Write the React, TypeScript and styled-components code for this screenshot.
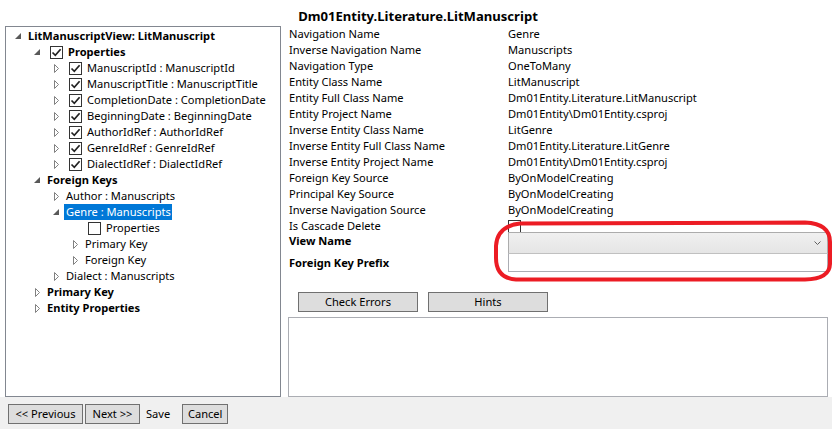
import React from 'react';
import styled, { createGlobalStyle } from 'styled-components';

const FONT = `'Segoe UI', 'Noto Sans', sans-serif`;

const GlobalStyle = createGlobalStyle`
  html, body { margin: 0; padding: 0; background: #f0f0f0; }
  body { font-family: ${FONT}; font-size: 11.1px; color: #000; }
  * { box-sizing: border-box; }
`;

const Window = styled.div`
  position: relative;
  width: 832px;
  height: 429px;
  display: flex;
  flex-direction: column;
  background: #f0f0f0;
  overflow: hidden;
`;

const Content = styled.div`
  height: 397px;
  background: #fff;
  display: flex;
  flex-direction: column;
`;

const Title = styled.div`
  height: 26px;
  padding-top: 6px;
  text-align: center;
  font-weight: bold;
  font-size: 13.1px;
  line-height: 20px;
  padding-left: 4px;
`;

const Main = styled.div`
  flex: 1;
  display: flex;
  gap: 7px;
  padding: 0 4px 0 5px;
  min-height: 0;
`;

const TreePanel = styled.div`
  width: 276px;
  border: 1px solid #828790;
  padding: 1px;
  display: flex;
  flex-direction: column;
`;

const TreeRow = styled.div<{ $level: number }>`
  display: flex;
  align-items: center;
  height: 16px;
  padding-left: ${p => p.$level * 19}px;
`;

const Expander = styled.div<{ $open: boolean }>`
  width: 19px;
  height: 16px;
  display: flex;
  align-items: center;
  padding-left: ${p => (p.$open ? 8 : 9)}px;
`;

const Header = styled.div<{ $selected?: boolean; $bold?: boolean }>`
  display: flex;
  align-items: center;
  height: 16px;
  padding: 0 1px;
  gap: 4px;
  background: ${p => (p.$selected ? '#0078d7' : 'transparent')};
  color: ${p => (p.$selected ? '#fff' : '#000')};
  font-weight: ${p => (p.$bold ? 'bold' : 'normal')};
  white-space: nowrap;
  line-height: 16px;
`;

const HeaderText = styled.span`
  padding-left: 1px;
`;

const CheckBoxBox = styled.span<{ $withLead?: boolean }>`
  width: 13px;
  height: 13px;
  border: 1px solid #333;
  background: #fff;
  display: inline-flex;
  align-items: center;
  justify-content: center;
  margin-left: ${p => (p.$withLead ? 4 : 0)}px;
  flex: none;
`;

const RightPanel = styled.div`
  width: 540px;
  display: flex;
  flex-direction: column;
`;

const PropsGrid = styled.div`
  display: grid;
  grid-template-columns: 220px 1fr;
  grid-auto-rows: 16px;
  line-height: 16px;
`;

const Label = styled.div<{ $bold?: boolean }>`
  padding-left: 1px;
  font-weight: ${p => (p.$bold ? 'bold' : 'normal')};
  white-space: nowrap;
`;

const Value = styled.div`
  white-space: nowrap;
  display: flex;
  align-items: center;
`;

const EditRow = styled.div<{ $h: number; $lift?: number }>`
  display: grid;
  grid-template-columns: 220px 1fr;
  height: ${p => p.$h}px;
  margin-top: ${p => -(p.$lift || 0)}px;
  align-items: start;
  line-height: 18px;
`;

const Combo = styled.div`
  height: 22px;
  border: 1px solid #acacac;
  background: linear-gradient(#f0f0f0, #e5e5e5);
  display: flex;
  align-items: center;
  justify-content: flex-end;
  padding-right: 6px;
`;

const TextInput = styled.div`
  height: 19px;
  border: 1px solid #abadb3;
  border-top-color: #c0c0c0;
  background: #fff;
  margin-top: -1px;
`;

const ButtonRow = styled.div`
  display: flex;
  gap: 10px;
  padding-left: 10px;
  margin-top: 20px;
`;

const Button = styled.button<{ $w: number }>`
  width: ${p => p.$w}px;
  height: 20px;
  border: 1px solid #707070;
  background: #dddddd;
  font-family: ${FONT};
  font-size: 11.1px;
  color: #000;
  padding: 0;
  line-height: 18px;
  margin: 0;
`;

const OutputBox = styled.div`
  margin-top: 5px;
  flex: 1;
  border: 1px solid #abadb3;
  background: #fff;
`;

const BottomBar = styled.div`
  flex: 1;
  display: flex;
  align-items: center;
  gap: 2px;
  padding-left: 8px;
  padding-top: 1px;
`;

const SaveLabel = styled.span`
  padding: 0 10px 0 4px;
  line-height: 20px;
`;

const Annotation = styled.svg`
  position: absolute;
  left: 0;
  top: 0;
  width: 832px;
  height: 429px;
  pointer-events: none;
`;

const Check: React.FC = () => (
  <svg width="11" height="11" viewBox="0 0 11 11">
    <path d="M1.5 5.5 L4.3 8.3 L9.6 2.2" fill="none" stroke="#212121" strokeWidth="1.7" />
  </svg>
);

const CheckBox: React.FC<{ checked?: boolean; lead?: boolean }> = ({ checked, lead }) => (
  <CheckBoxBox $withLead={lead}>{checked ? <Check /> : null}</CheckBoxBox>
);

const ExpIcon: React.FC<{ open: boolean }> = ({ open }) =>
  open ? (
    <svg width="6" height="6" viewBox="0 0 6 6">
      <path d="M6 0 L6 6 L0 6 Z" fill="#595959" />
    </svg>
  ) : (
    <svg width="5" height="9" viewBox="0 0 5 9">
      <path d="M0.5 0.5 L0.5 8.5 L4.5 4.5 Z" fill="#fff" stroke="#818181" strokeWidth="1" />
    </svg>
  );

type Node = {
  level: number;
  exp?: 'open' | 'closed';
  label: string;
  bold?: boolean;
  check?: boolean | null;
  selected?: boolean;
};

const tree: Node[] = [
  { level: 0, exp: 'open', label: 'LitManuscriptView: LitManuscript', bold: true },
  { level: 1, exp: 'open', label: 'Properties', bold: true, check: true },
  { level: 2, exp: 'closed', label: 'ManuscriptId : ManuscriptId', check: true },
  { level: 2, exp: 'closed', label: 'ManuscriptTitle : ManuscriptTitle', check: true },
  { level: 2, exp: 'closed', label: 'CompletionDate : CompletionDate', check: true },
  { level: 2, exp: 'closed', label: 'BeginningDate : BeginningDate', check: true },
  { level: 2, exp: 'closed', label: 'AuthorIdRef : AuthorIdRef', check: true },
  { level: 2, exp: 'closed', label: 'GenreIdRef : GenreIdRef', check: true },
  { level: 2, exp: 'closed', label: 'DialectIdRef : DialectIdRef', check: true },
  { level: 1, exp: 'open', label: 'Foreign Keys', bold: true },
  { level: 2, exp: 'closed', label: 'Author : Manuscripts' },
  { level: 2, exp: 'open', label: 'Genre : Manuscripts', selected: true },
  { level: 3, label: 'Properties', check: false },
  { level: 3, exp: 'closed', label: 'Primary Key' },
  { level: 3, exp: 'closed', label: 'Foreign Key' },
  { level: 2, exp: 'closed', label: 'Dialect : Manuscripts' },
  { level: 1, exp: 'closed', label: 'Primary Key', bold: true },
  { level: 1, exp: 'closed', label: 'Entity Properties', bold: true },
];

const props: [string, string][] = [
  ['Navigation Name', 'Genre'],
  ['Inverse Navigation Name', 'Manuscripts'],
  ['Navigation Type', 'OneToMany'],
  ['Entity Class Name', 'LitManuscript'],
  ['Entity Full Class Name', 'Dm01Entity.Literature.LitManuscript'],
  ['Entity Project Name', 'Dm01Entity\\Dm01Entity.csproj'],
  ['Inverse Entity Class Name', 'LitGenre'],
  ['Inverse Entity Full Class Name', 'Dm01Entity.Literature.LitGenre'],
  ['Inverse Entity Project Name', 'Dm01Entity\\Dm01Entity.csproj'],
  ['Foreign Key Source', 'ByOnModelCreating'],
  ['Principal Key Source', 'ByOnModelCreating'],
  ['Inverse Navigation Source', 'ByOnModelCreating'],
];

export default function App() {
  return (
    <>
      <GlobalStyle />
      <Window>
        <Content>
          <Title>Dm01Entity.Literature.LitManuscript</Title>
          <Main>
            <TreePanel>
              {tree.map((n, i) => (
                <TreeRow key={i} $level={n.level}>
                  <Expander $open={n.exp === 'open'}>
                    {n.exp ? <ExpIcon open={n.exp === 'open'} /> : null}
                  </Expander>
                  <Header $selected={n.selected} $bold={n.bold}>
                    {n.check !== undefined && n.check !== null ? <CheckBox checked={n.check} lead /> : null}
                    <HeaderText>{n.label}</HeaderText>
                  </Header>
                </TreeRow>
              ))}
            </TreePanel>
            <RightPanel>
              <PropsGrid>
                {props.map(([k, v]) => (
                  <React.Fragment key={k}>
                    <Label>{k}</Label>
                    <Value>{v}</Value>
                  </React.Fragment>
                ))}
                <Label>Is Cascade Delete</Label>
                <Value>
                  <CheckBox />
                </Value>
              </PropsGrid>
              <EditRow $h={22} $lift={2}>
                <Label $bold>View Name</Label>
                <Combo>
                  <svg width="7" height="4" viewBox="0 0 7 4">
                    <path d="M0.5 0.5 L3.5 3.5 L6.5 0.5" fill="none" stroke="#606060" strokeWidth="1" />
                  </svg>
                </Combo>
              </EditRow>
              <EditRow $h={18}>
                <Label $bold>Foreign Key Prefix</Label>
                <TextInput />
              </EditRow>
              <ButtonRow>
                <Button $w={120}>Check Errors</Button>
                <Button $w={120}>Hints</Button>
              </ButtonRow>
              <OutputBox />
            </RightPanel>
          </Main>
        </Content>
        <BottomBar>
          <Button $w={75}>&lt;&lt; Previous</Button>
          <Button $w={55}>Next &gt;&gt;</Button>
          <SaveLabel>Save</SaveLabel>
          <Button $w={46}>Cancel</Button>
        </BottomBar>
        <Annotation viewBox="0 0 832 429">
          <path
            d="M520 223.5 L805 222.5 Q830 223.5 830 242 L830 264 Q829.5 279 805 279.5 L516 279.5 Q496 278 496 258 L496 246 Q497 226 520 223.5 Z"
            fill="none"
            stroke="#ec1c24"
            strokeWidth="4"
          />
        </Annotation>
      </Window>
    </>
  );
}
